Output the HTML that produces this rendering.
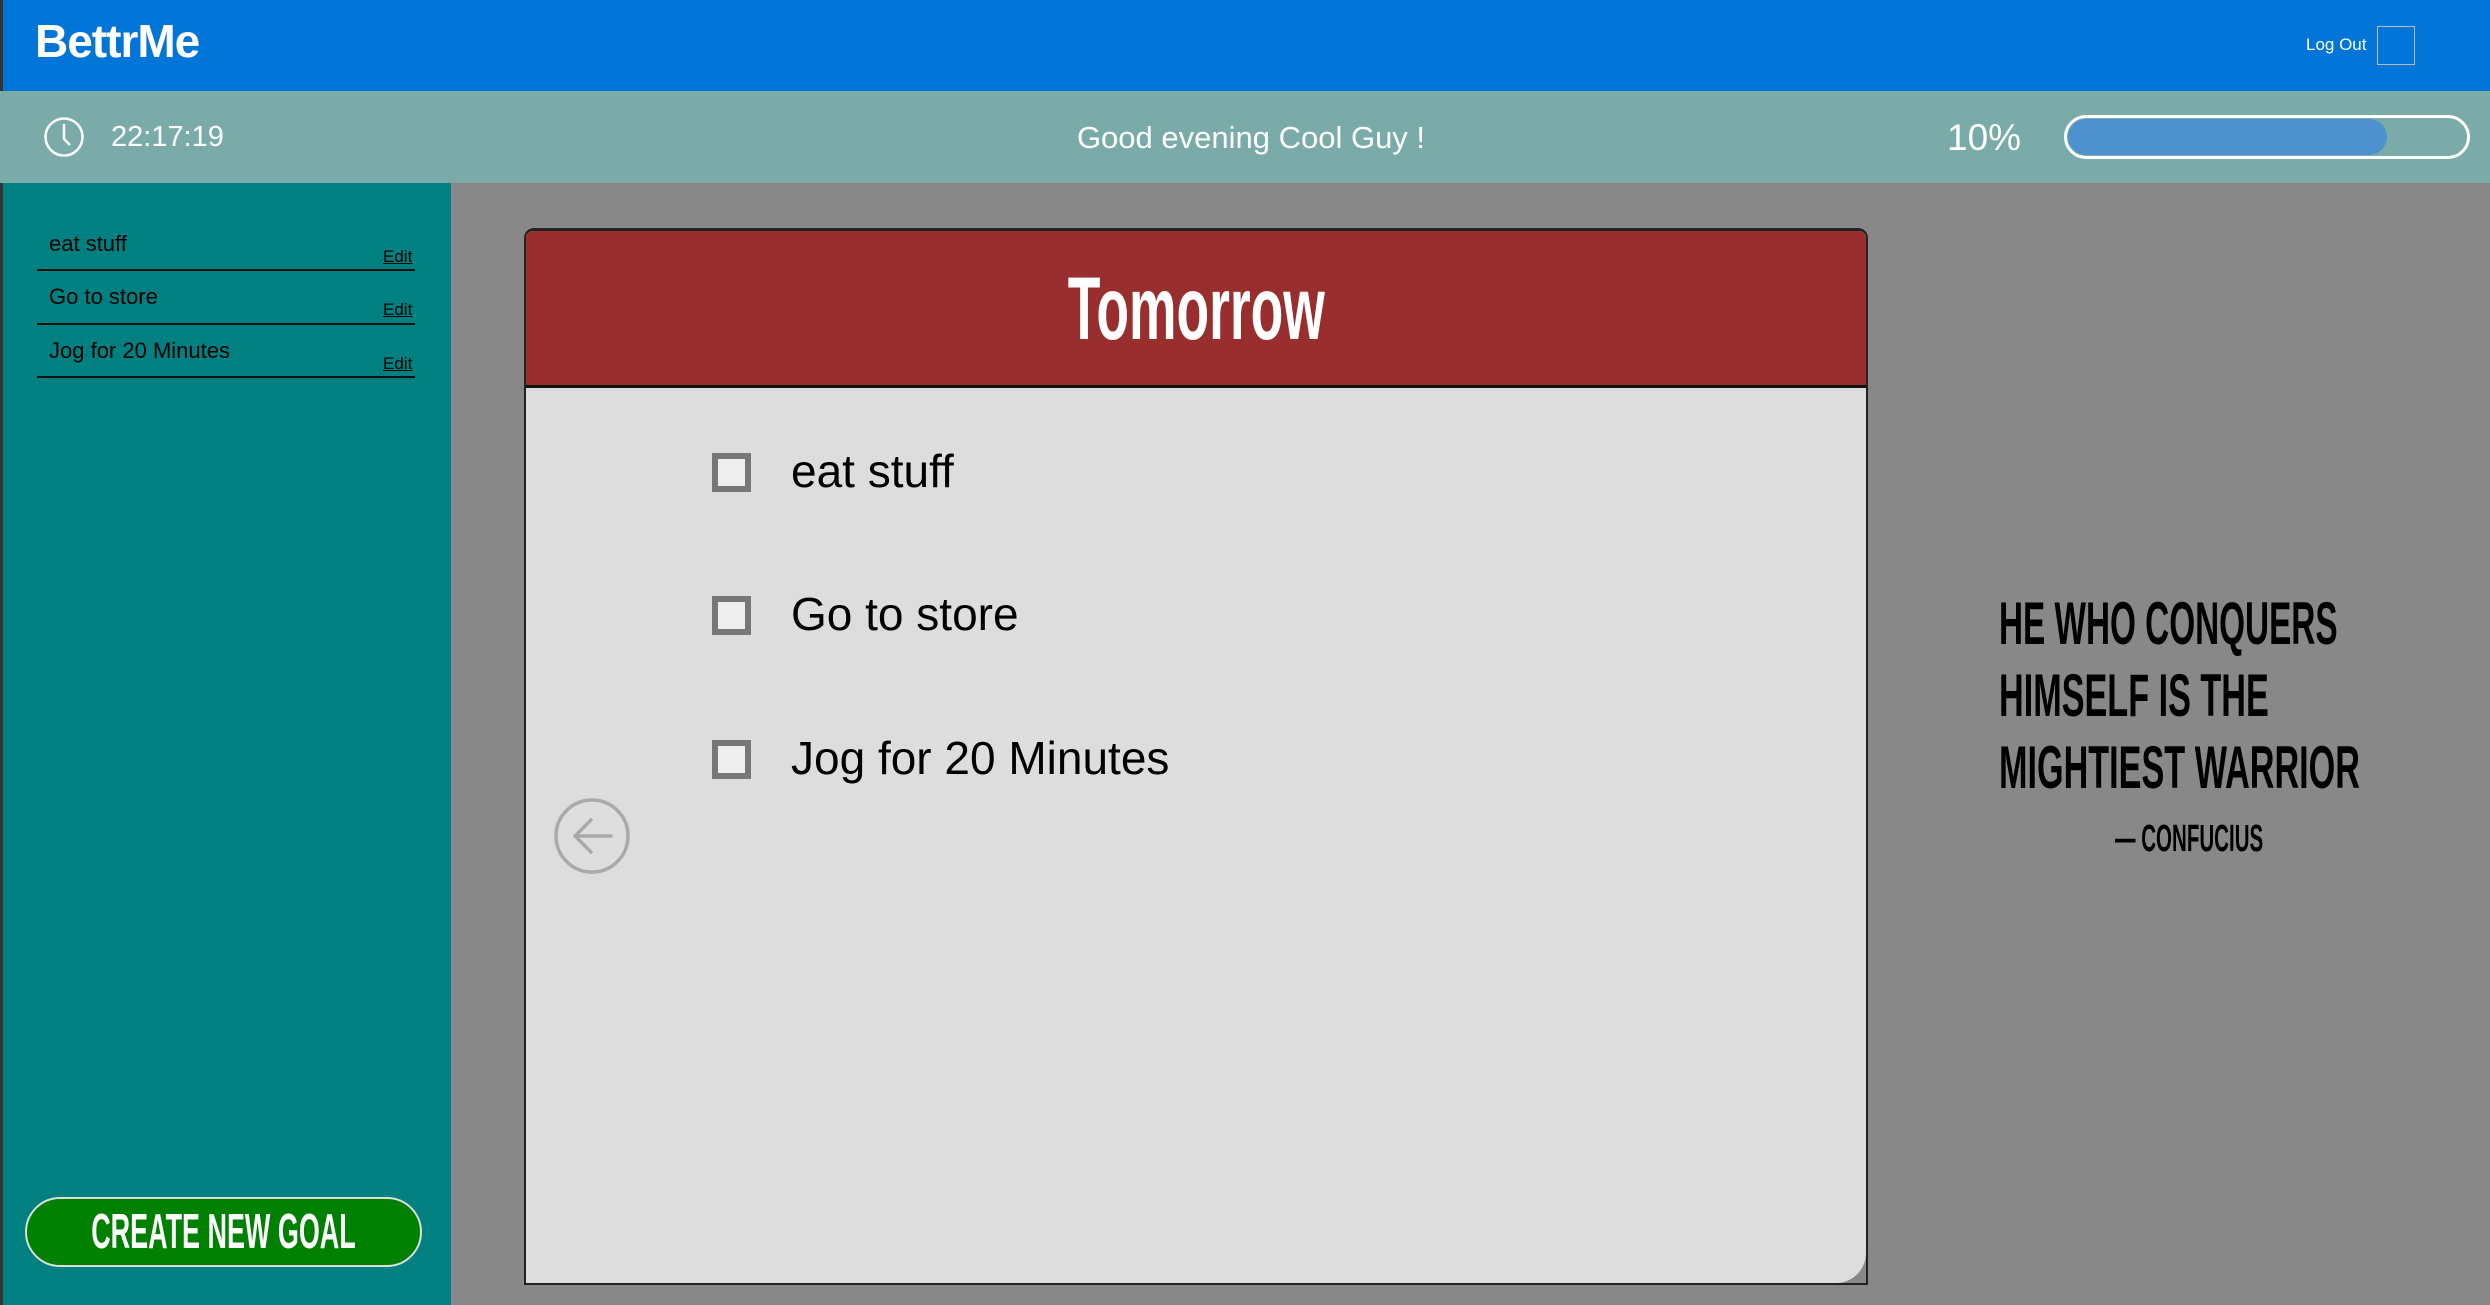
<!DOCTYPE html>
<html><head><meta charset="utf-8"><style>
*{margin:0;padding:0;box-sizing:border-box}
body{width:2490px;height:1305px;overflow:hidden;background:#888;font-family:"Liberation Sans",sans-serif;position:relative}
.abs{position:absolute}
.c{display:inline-block;transform-origin:left top;white-space:nowrap}
</style></head><body>
<div class="abs" style="left:0;top:0;width:2490px;height:91px;background:#0275d8"></div>
<div class="abs" style="left:0;top:0;width:3px;height:1305px;background:#333"></div>
<div class="abs" style="left:35px;top:14px;color:#fff;font-weight:bold;font-size:46px;letter-spacing:-1px">BettrMe</div>
<div class="abs" style="left:2306px;top:35px;color:#fff;font-size:17px">Log Out</div>
<div class="abs" style="left:2377px;top:26px;width:38px;height:39px;border:1px solid #bbb"></div>
<div class="abs" style="left:0;top:91px;width:2490px;height:92px;background:#7aaba9"></div>
<svg class="abs" style="left:43px;top:116px" width="42" height="42" viewBox="0 0 42 42"><circle cx="21" cy="21" r="18.5" fill="none" stroke="#fff" stroke-width="2.5"/><path d="M21 8V23L27 29" fill="none" stroke="#fff" stroke-width="2.5"/></svg>
<div class="abs" style="left:111px;top:121px;color:#fff;font-size:29px">22:17:19</div>
<div class="abs" style="left:1051px;width:400px;text-align:center;top:120px;color:#fff;font-size:31px">Good evening Cool Guy !</div>
<div class="abs" style="left:1947px;top:117px;color:#fff;font-size:37px">10%</div>
<div class="abs" style="left:2064px;top:115px;width:406px;height:44px;border:3px solid #fff;border-radius:22px"></div>
<div class="abs" style="left:2068px;top:119px;width:319px;height:36px;background:#4d92ce;border-radius:18px"></div>
<div class="abs" style="left:3px;top:183px;width:448px;height:1122px;background:#008080"></div>
<div class="abs" style="left:37px;top:269px;width:378px;height:2px;background:#111"></div>
<div class="abs" style="left:37px;top:323px;width:378px;height:2px;background:#111"></div>
<div class="abs" style="left:37px;top:376px;width:378px;height:2px;background:#111"></div>
<div class="abs" style="left:49px;top:231px;font-size:22px">eat stuff</div>
<div class="abs" style="left:49px;top:284px;font-size:22px">Go to store</div>
<div class="abs" style="left:49px;top:338px;font-size:22px">Jog for 20 Minutes</div>
<div class="abs" style="left:383px;top:247px;font-size:17px;text-decoration:underline">Edit</div>
<div class="abs" style="left:383px;top:300px;font-size:17px;text-decoration:underline">Edit</div>
<div class="abs" style="left:383px;top:354px;font-size:17px;text-decoration:underline">Edit</div>
<div class="abs" style="left:25px;top:1197px;width:397px;height:70px;background:#008000;border:2px solid #ddd;border-radius:35px;display:flex;justify-content:center;overflow:visible">
<span class="c" style="color:#fff;font-weight:bold;font-size:49px;line-height:66px;transform:scaleX(.55);transform-origin:center top;flex:none">CREATE NEW GOAL</span></div>
<div class="abs" style="left:524px;top:228px;width:1344px;height:1057px;border:2px solid #222;border-top-width:3px;border-radius:10px 10px 0 0;background:#888;overflow:hidden">
<div style="position:absolute;left:0;top:0;right:0;bottom:0;background:#ddd;border-bottom-right-radius:30px"></div>
<div style="position:absolute;left:0;top:0;right:0;height:157px;background:#992e2e;border-bottom:3px solid #111;text-align:center">
<span class="c" style="color:#fff;font-weight:bold;font-size:89px;line-height:154px;transform:scaleX(.6);transform-origin:center top">Tomorrow</span></div>
</div>
<div class="abs" style="left:712px;top:453px;width:39px;height:39px;border:6px solid #777;background:#eee"></div>
<div class="abs" style="left:712px;top:596px;width:39px;height:39px;border:6px solid #777;background:#eee"></div>
<div class="abs" style="left:712px;top:740px;width:39px;height:39px;border:6px solid #777;background:#eee"></div>
<div class="abs" style="left:791px;top:444px;font-size:46px">eat stuff</div>
<div class="abs" style="left:791px;top:587px;font-size:46px">Go to store</div>
<div class="abs" style="left:791px;top:731px;font-size:46px">Jog for 20 Minutes</div>
<svg class="abs" style="left:553px;top:797px" width="78" height="78" viewBox="0 0 78 78"><circle cx="39" cy="39" r="36" fill="none" stroke="#aaa" stroke-width="3.5"/><path d="M58 39H22M38 23L22 39L38 55" fill="none" stroke="#aaa" stroke-width="3.5" stroke-linecap="round" stroke-linejoin="round"/></svg>
<div class="abs" style="left:1999px;top:588px;font-weight:bold;font-size:60px;line-height:72px">
<span class="c" style="transform:scaleX(.555)">HE WHO CONQUERS</span><br>
<span class="c" style="transform:scaleX(.57)">HIMSELF IS THE</span><br>
<span class="c" style="transform:scaleX(.57)">MIGHTIEST WARRIOR</span></div>
<div class="abs" style="left:2115px;top:818px;font-weight:bold;font-size:38px"><span class="c" style="transform:scaleX(.54)">— CONFUCIUS</span></div>
</body></html>
